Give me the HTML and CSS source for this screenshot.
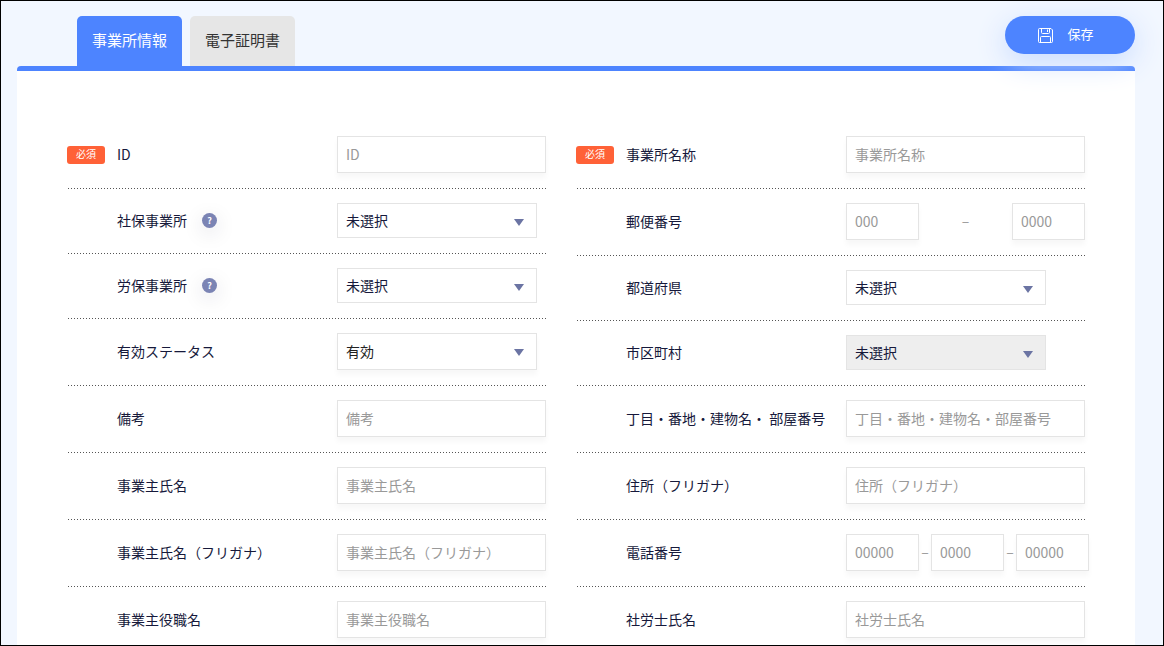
FILE: index.html
```html
<!DOCTYPE html>
<html lang="ja">
<head>
  <meta charset="UTF-8">
  <meta name="viewport" content="width=device-width, initial-scale=1">
  <title>事業所情報</title>
  <link rel="stylesheet" href="styles.css">
</head>
<body>
  <form class="page">
    <header class="header">
      <nav class="tabs">
        <a class="tab active" href="#office">事業所情報</a>
        <a class="tab" href="#certificate">電子証明書</a>
      </nav>
      <button class="save-button" type="button">
        <svg class="save-icon" viewBox="0 0 15 15" fill="none" stroke="currentColor">
          <path d="M1.5 .5h11.500l1.500 1.500v11.500a1 1 0 0 1-1 1h-12a1 1 0 0 1-1-1v-12a1 1 0 0 1 1-1z"/>
          <path d="M3.500 .500v4a1 1 0 0 0 1 1h6a1 1 0 0 0 1-1v-4M9.500 1.500v2.500"/>
          <path d="M2.500 14.500v-5a1 1 0 0 1 1-1h8a1 1 0 0 1 1 1v5" />
        </svg>
        <span class="save-text">保存</span>
      </button>
    </header>

    <main class="panel" id="office">
      <div class="column">
        <div class="row">
          <span class="mark"><span class="required">必須</span></span>
          <div class="label"><label for="officeId">ID</label></div>
          <div class="field"><input class="input" type="text" id="officeId" placeholder="ID"></div>
        </div>
        <div class="row">
          <span class="mark"></span>
          <div class="label">
            <label for="shaho">社保事業所</label>
            <button class="help" type="button">?</button>
          </div>
          <div class="field">
            <select class="select" id="shaho"><option>未選択</option></select>
          </div>
        </div>
        <div class="row">
          <span class="mark"></span>
          <div class="label">
            <label for="roho">労保事業所</label>
            <button class="help" type="button">?</button>
          </div>
          <div class="field">
            <select class="select" id="roho"><option>未選択</option></select>
          </div>
        </div>
        <div class="row">
          <span class="mark"></span>
          <div class="label"><label for="status">有効ステータス</label></div>
          <div class="field">
            <select class="select tall" id="status"><option>有効</option><option>無効</option></select>
          </div>
        </div>
        <div class="row">
          <span class="mark"></span>
          <div class="label"><label for="note">備考</label></div>
          <div class="field"><input class="input" type="text" id="note" placeholder="備考"></div>
        </div>
        <div class="row">
          <span class="mark"></span>
          <div class="label"><label for="owner">事業主氏名</label></div>
          <div class="field"><input class="input" type="text" id="owner" placeholder="事業主氏名"></div>
        </div>
        <div class="row">
          <span class="mark"></span>
          <div class="label"><label for="ownerKana">事業主氏名（フリガナ）</label></div>
          <div class="field"><input class="input" type="text" id="ownerKana" placeholder="事業主氏名（フリガナ）"></div>
        </div>
        <div class="row">
          <span class="mark"></span>
          <div class="label"><label for="ownerTitle">事業主役職名</label></div>
          <div class="field"><input class="input" type="text" id="ownerTitle" placeholder="事業主役職名"></div>
        </div>
      </div>

      <div class="column">
        <div class="row">
          <span class="mark"><span class="required">必須</span></span>
          <div class="label"><label for="officeName">事業所名称</label></div>
          <div class="field"><input class="input" type="text" id="officeName" placeholder="事業所名称"></div>
        </div>
        <div class="row">
          <span class="mark"></span>
          <div class="label"><label for="zip1">郵便番号</label></div>
          <div class="field parts zip">
            <input class="input short" type="text" id="zip1" placeholder="000">
            <span class="dash">–</span>
            <input class="input short" type="text" aria-label="郵便番号 下4桁" placeholder="0000">
          </div>
        </div>
        <div class="row">
          <span class="mark"></span>
          <div class="label"><label for="prefecture">都道府県</label></div>
          <div class="field">
            <select class="select" id="prefecture"><option>未選択</option></select>
          </div>
        </div>
        <div class="row">
          <span class="mark"></span>
          <div class="label"><label for="city">市区町村</label></div>
          <div class="field">
            <select class="select" id="city" disabled><option>未選択</option></select>
          </div>
        </div>
        <div class="row">
          <span class="mark"></span>
          <div class="label"><label for="street">丁目・番地・建物名・ 部屋番号</label></div>
          <div class="field"><input class="input" type="text" id="street" placeholder="丁目・番地・建物名・部屋番号"></div>
        </div>
        <div class="row">
          <span class="mark"></span>
          <div class="label"><label for="addressKana">住所（フリガナ）</label></div>
          <div class="field"><input class="input" type="text" id="addressKana" placeholder="住所（フリガナ）"></div>
        </div>
        <div class="row">
          <span class="mark"></span>
          <div class="label"><label for="tel1">電話番号</label></div>
          <div class="field parts">
            <input class="input short" type="text" id="tel1" placeholder="00000">
            <span class="dash">–</span>
            <input class="input short" type="text" aria-label="電話番号 市内局番" placeholder="0000">
            <span class="dash">–</span>
            <input class="input short" type="text" aria-label="電話番号 加入者番号" placeholder="00000">
          </div>
        </div>
        <div class="row">
          <span class="mark"></span>
          <div class="label"><label for="sharoshi">社労士氏名</label></div>
          <div class="field"><input class="input" type="text" id="sharoshi" placeholder="社労士氏名"></div>
        </div>
      </div>
    </main>
  </form>
</body>
</html>
```

FILE: styles.css
```css
* {
  box-sizing: border-box;
}

body {
  margin: 0;
  font-family: "Noto Sans CJK JP", sans-serif;
  font-size: 14px;
  line-height: 20px;
  color: #16193b;
}

input,
select,
button {
  font: inherit;
  color: inherit;
}

.page {
  height: 100vh;
  overflow: hidden;
  padding: 15px 28px 0 16px;
  border: 1px solid #000;
  background-color: #f2f7ff;
}

.header {
  display: flex;
  justify-content: space-between;
  align-items: flex-start;
}

.tabs {
  display: flex;
  gap: 8px;
  padding-left: 60px;
}

.tab {
  height: 50px;
  padding: 0 15px;
  border-radius: 5px 5px 0 0;
  background-color: #e6e6e6;
  color: #333;
  font-size: 15px;
  line-height: 48px;
  text-decoration: none;
}

.tab.active {
  background-color: #4d84ff;
  color: #fff;
}

/* z-index keeps the glow above the panel border */
.save-button {
  position: relative;
  z-index: 1;
  display: flex;
  justify-content: center;
  align-items: center;
  gap: 14px;
  width: 130px;
  height: 38px;
  padding: 0 8px 0 0;
  border: none;
  border-radius: 19px;
  background-color: #4d84ff;
  box-shadow: 0 8px 30px #c8dbff;
  color: #fff;
  font-size: 13px;
  cursor: pointer;
}

.save-icon {
  width: 15px;
  height: 15px;
}

.save-text {
  padding-bottom: 2px;
}

.panel {
  display: grid;
  grid-template-columns: repeat(2, minmax(0, 1fr));
  padding: 51px 50px;
  border-top: 5px solid #4d84ff;
  border-radius: 4px;
  background-color: #fff;
}

.column:first-child {
  padding-right: 30px;
}

/* dotted rule along the bottom, one dot every 3px */
.row {
  display: flex;
  align-items: center;
  padding: 14px 0 16px;
  background: repeating-linear-gradient(to right, transparent 0 1px, #555 1px 2px, transparent 2px 3px) bottom / 100% 1px no-repeat;
}

.mark {
  flex: 0 0 50px;
}

.required {
  display: block;
  width: 38px;
  height: 18px;
  border-radius: 3px;
  background-color: #ff6137;
  color: #fff;
  font-size: 10px;
  line-height: 16px;
  text-align: center;
}

.label {
  display: flex;
  align-items: center;
  flex: 0 0 220px;
  gap: 15px;
}

.label label {
  padding-bottom: 2px;
}

.help {
  width: 15px;
  height: 15px;
  padding: 0;
  border: none;
  border-radius: 50%;
  background-color: #7b84b4;
  box-shadow: 0 5px 20px rgba(22, 25, 59, 0.15);
  color: #fff;
  font-size: 9px;
  font-weight: 700;
  line-height: 15px;
  text-align: center;
}

.field {
  flex: 1;
  min-width: 0;
}

.input {
  display: block;
  width: 100%;
  height: 37px;
  padding: 0 8px 2px;
  border: 1px solid #e4e4e4;
  background-color: #fff;
  box-shadow: 0 5px 5px rgba(0, 0, 0, 0.03);
}

.input::placeholder {
  color: #999;
  opacity: 1;
}

.input.short {
  flex: 0 0 73px;
  width: 73px;
}

.select {
  display: block;
  width: 200px;
  height: 35px;
  padding: 0 30px 1px 8px;
  border: 1px solid #e4e4e4;
  border-radius: 0;
  background: #fff url("data:image/svg+xml,%3Csvg xmlns='http://www.w3.org/2000/svg' width='10' height='8'%3E%3Cpath d='M0 1h10L5 8z' fill='%236b74a3'/%3E%3C/svg%3E") no-repeat right 12px top 14px;
  appearance: none;
}

.select:disabled {
  background-color: #eee;
  opacity: 1;
}

.select.tall {
  height: 37px;
  padding-bottom: 2px;
  box-shadow: 0 5px 5px rgba(0, 0, 0, 0.03);
  color: #222;
}

.parts {
  display: flex;
  align-items: center;
}

.parts.zip {
  justify-content: space-between;
}

.dash {
  flex: 0 0 12px;
  padding-bottom: 3px;
  color: #999;
  text-align: center;
}
```
